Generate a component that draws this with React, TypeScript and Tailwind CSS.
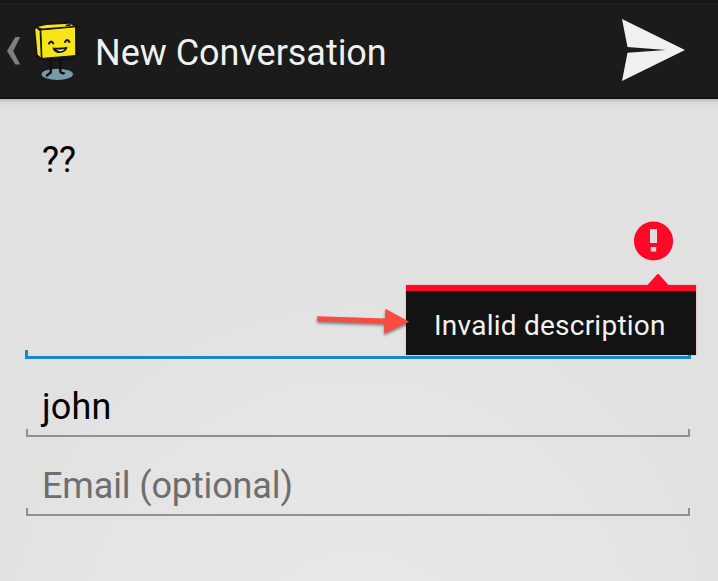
import React from "react";

function BackChevron() {
  return (
    <svg className="mt-[2px] ml-[6px] h-[30px] w-[15px] shrink-0" viewBox="0 0 15 30">
      <path d="M9.4 1H14.2L7.2 15L14.2 28.6H9.4L1 15Z" fill="#7f7f7f" />
    </svg>
  );
}

function Mascot() {
  return (
    <svg className="mt-[2px] ml-[11px] h-[62px] w-[50px] shrink-0" viewBox="32 20 50 62" fill="none">
      <path d="M34 27L40 24L70 21L77 25L79 56L71 61L43 61L36 57Z" fill="#141414" />
      <ellipse cx="57.3" cy="74.3" rx="15.7" ry="5.6" fill="#7899aa" />
      <path d="M50.8 59V72.4L46.8 75.6M60.3 59V70.8Q60.5 73.6 63.8 73.2" stroke="#101010" strokeWidth="2.4" strokeLinecap="round" />
      <path d="M36.2 28L39.6 31.3L40.8 57.6L37.6 54.5L35.3 29.5Z" fill="#f7e51c" />
      <path d="M37.5 27L46 25.1L70.3 23.7L73.5 26L42 28.6Z" fill="#f7e51c" />
      <path d="M40.8 30L75.6 26.8L75.8 55.6L42 58.4Z" fill="#f7e51c" stroke="#111" strokeWidth="1" />
      <path d="M65.8 25.6L70.8 24.8" stroke="#111" strokeWidth="1.5" />
      <path d="M49 43.5Q51 39.8 53.2 43.3M65 42Q67 38.4 69.3 41.8" stroke="#191b15" strokeWidth="2.1" strokeLinecap="round" />
      <path d="M52.5 47.5Q60 48.4 67.4 46.8C67 54.5 53.3 55.3 52.5 47.5Z" fill="#191b15" />
      <path d="M56.7 49.3Q60.5 50.1 64.5 49C62.7 51.8 58.5 52 56.7 49.3Z" fill="#f5f5ee" />
    </svg>
  );
}

function SendIcon() {
  return (
    <svg className="mr-[32px] h-[64px] w-[66px] shrink-0" viewBox="0 0 66 64">
      <path d="M2 1L65 32L2 63L7.5 34.8L46 32L7.5 29L2 1Z" fill="#f0f0f0" />
    </svg>
  );
}

function Underline({ focused = false }: { focused?: boolean }) {
  return focused ? (
    <div className="mx-[25px] h-[9px] w-[666px] border-x-[3px] border-b-[3px] border-[#148ac7]" />
  ) : (
    <div className="mx-[26px] h-[8px] w-[664px] border-x-2 border-b-2 border-[#919191]" />
  );
}

function ErrorPopup() {
  return (
    <div className="absolute top-[174px] left-[406px] w-[290px]">
      <svg className="ml-[240px] block h-[12px] w-[24px]" viewBox="0 0 24 12">
        <path d="M1.5 12L11 1.5Q12 0 13 1.5L22.5 12Z" fill="#ff0827" />
      </svg>
      <div className="h-[70px] border-t-[6px] border-[#ff0827] bg-[#131313] pt-[19px] pl-[28px] text-[28px] leading-[32px] tracking-[0.24px] whitespace-nowrap text-[#f2f2f2] shadow-[0_0_2px_rgba(255,8,39,0.3)]">
        Invalid description
      </div>
    </div>
  );
}

function PointerArrow() {
  return (
    <svg className="absolute top-[204px] left-[312px] h-[42px] w-[102px]" viewBox="312 303 102 42">
      <path
        className="drop-shadow-[0_2px_1.5px_rgba(0,0,0,0.45)]"
        d="M317.2 316.2L385 318.4L385.4 308.8L409.2 321.8L384 333.4L384.4 323.5L317.2 321.3Z"
        fill="#f94b3e"
      />
    </svg>
  );
}

export default function App() {
  return (
    <div className="flex h-[581px] w-[718px] flex-col overflow-hidden bg-[#e1e1e1] font-[Roboto,sans-serif]">
      <header className="flex h-[99px] shrink-0 items-center border-t-[3px] border-b-2 border-t-[#171717] border-b-[#121212] bg-[#1b1b1b] shadow-[inset_0_1px_#252525]">
        <BackChevron />
        <Mascot />
        <h1 className="mt-[5px] ml-[13px] grow text-[36px] leading-[40px] font-normal tracking-[-0.03px] whitespace-nowrap text-[#f0f0f0]">
          New Conversation
        </h1>
        <SendIcon />
      </header>
      <main className="relative flex h-[482px] flex-col bg-[radial-gradient(circle_at_359px_560px,#e9e9e9_0,#e3e3e3_340px,#e1e1e1_390px)] text-[36px] leading-[40px] text-black">
        <div className="h-[10px] shrink-0 bg-linear-to-b from-[#b7b7b7] via-[#d8d8d8] via-30% to-[#e1e1e1]" />
        <div className="flex h-[241px] justify-between pt-[31px] pl-[42px]">
          <p>??</p>
          <svg className="mt-[80px] mr-[44px] h-[42px] w-[42px]" viewBox="0 0 42 42">
            <circle cx="21.5" cy="21" r="19.6" fill="#ff0827" />
            <path d="M18 9H25V23H18ZM18.8 27H24.2V31.5H18.8Z" fill="#e4dce0" />
          </svg>
        </div>
        <Underline focused />
        <p className="mt-[28px] h-[42px] pl-[42px] tracking-[0.2px]">john</p>
        <Underline />
        <p className="mt-[29px] h-[42px] pl-[42px] tracking-[-0.13px] text-[#6e6e6e]">Email (optional)</p>
        <Underline />
        <ErrorPopup />
        <PointerArrow />
      </main>
    </div>
  );
}
